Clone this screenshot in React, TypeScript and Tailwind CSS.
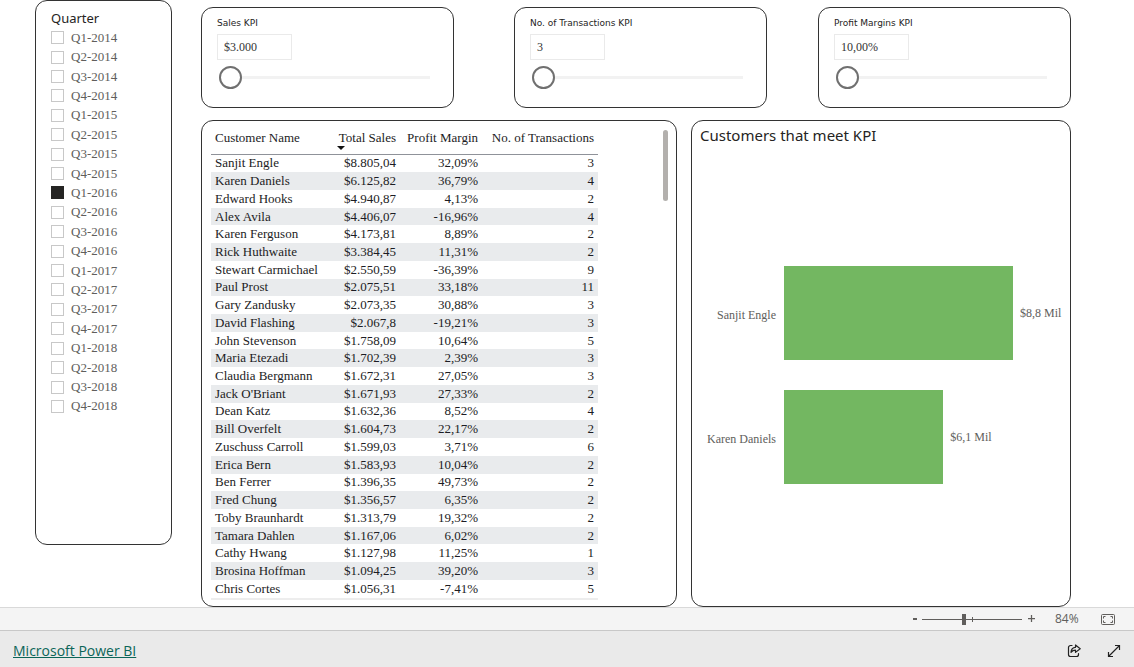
import { useState } from "react";

const serif = "font-['Liberation_Serif',serif]";
const sans = "font-['Noto_Sans',sans-serif]";
const panel = "rounded-xl border border-[#333] bg-white";

const years = [2014, 2015, 2016, 2017, 2018];
const quarters = years.flatMap((y) => [1, 2, 3, 4].map((q) => `Q${q}-${y}`));

const customers: [string, string, string, number][] = [
  ["Sanjit Engle", "$8.805,04", "32,09%", 3],
  ["Karen Daniels", "$6.125,82", "36,79%", 4],
  ["Edward Hooks", "$4.940,87", "4,13%", 2],
  ["Alex Avila", "$4.406,07", "-16,96%", 4],
  ["Karen Ferguson", "$4.173,81", "8,89%", 2],
  ["Rick Huthwaite", "$3.384,45", "11,31%", 2],
  ["Stewart Carmichael", "$2.550,59", "-36,39%", 9],
  ["Paul Prost", "$2.075,51", "33,18%", 11],
  ["Gary Zandusky", "$2.073,35", "30,88%", 3],
  ["David Flashing", "$2.067,8", "-19,21%", 3],
  ["John Stevenson", "$1.758,09", "10,64%", 5],
  ["Maria Etezadi", "$1.702,39", "2,39%", 3],
  ["Claudia Bergmann", "$1.672,31", "27,05%", 3],
  ["Jack O'Briant", "$1.671,93", "27,33%", 2],
  ["Dean Katz", "$1.632,36", "8,52%", 4],
  ["Bill Overfelt", "$1.604,73", "22,17%", 2],
  ["Zuschuss Carroll", "$1.599,03", "3,71%", 6],
  ["Erica Bern", "$1.583,93", "10,04%", 2],
  ["Ben Ferrer", "$1.396,35", "49,73%", 2],
  ["Fred Chung", "$1.356,57", "6,35%", 2],
  ["Toby Braunhardt", "$1.313,79", "19,32%", 2],
  ["Tamara Dahlen", "$1.167,06", "6,02%", 2],
  ["Cathy Hwang", "$1.127,98", "11,25%", 1],
  ["Brosina Hoffman", "$1.094,25", "39,20%", 3],
  ["Chris Cortes", "$1.056,31", "-7,41%", 5],
];

const bars = [
  { name: "Sanjit Engle", sales: 8805.04, label: "$8,8 Mil" },
  { name: "Karen Daniels", sales: 6125.82, label: "$6,1 Mil" },
];
const maxSales = Math.max(...bars.map((b) => b.sales));

function Slicer() {
  const [selected, setSelected] = useState("Q1-2016");
  return (
    <fieldset className={`${panel} mb-[62px] w-[137px] shrink-0 px-[15px] pt-[7px]`}>
      <legend className={`${sans} float-left text-[13px] leading-5 text-[#252423]`}>Quarter</legend>
      <ul className="clear-both flex h-[388px] flex-col">
        {quarters.map((q) => (
          <li key={q} className="flex flex-1 items-center">
            <label className={`${serif} flex items-center gap-[7px] text-[13px] leading-4 text-[#605e5c]`}>
              <input
                type="checkbox"
                checked={selected === q}
                onChange={() => setSelected(q)}
                className="size-[13px] appearance-none border border-[#c8c8c8] bg-white checked:border-[#252423] checked:bg-[#252423]"
              />
              {q}
            </label>
          </li>
        ))}
      </ul>
    </fieldset>
  );
}

function KpiCard({ id, title, value, className = "" }: { id: string; title: string; value: string; className?: string }) {
  const [text, setText] = useState(value);
  return (
    <section className={`${panel} h-[101px] min-w-0 flex-1 px-[15px] pt-[7px] ${className}`}>
      <label htmlFor={id} className="block font-['DejaVu_Sans',sans-serif] text-[9px] leading-4 text-[#252423]">
        {title}
      </label>
      <input
        id={id}
        value={text}
        onChange={(e) => setText(e.target.value)}
        className={`${serif} mt-[3px] block h-[26px] w-[75px] border border-[#eaeaea] px-1.5 text-[12px] leading-4 text-[#333]`}
      />
      <div className="mt-1.5 pr-2 pl-0.5">
        <input
          type="range"
          aria-label={title}
          defaultValue={0}
          className="block h-[23px] w-full appearance-none bg-transparent [&::-webkit-slider-runnable-track]:h-[3px] [&::-webkit-slider-runnable-track]:bg-[#f2f2f2] [&::-webkit-slider-thumb]:-mt-[10px] [&::-webkit-slider-thumb]:size-[23px] [&::-webkit-slider-thumb]:appearance-none [&::-webkit-slider-thumb]:rounded-full [&::-webkit-slider-thumb]:border-2 [&::-webkit-slider-thumb]:border-[#707070] [&::-webkit-slider-thumb]:bg-white"
        />
      </div>
    </section>
  );
}

function CustomerTable() {
  return (
    <section className={`${panel} flex items-start justify-between pt-[9px] pr-2 pl-[9px]`}>
      <table className={`${serif} h-[470px] w-[387px] table-fixed border-collapse border-b-2 border-[#ededed] text-[13px] leading-4 text-[#1c1c24]`}>
        <colgroup>
          <col className="w-[120px]" />
          <col className="w-[69px]" />
          <col className="w-[82px]" />
          <col />
        </colgroup>
        <thead>
          <tr className="h-6 border-b border-[#8f9299] align-top whitespace-nowrap">
            <th className="px-1 text-left font-normal">Customer Name</th>
            <th className="px-1 text-right font-normal" aria-sort="descending">
              Total Sales
              <svg viewBox="0 0 8 4" className="ml-0.5 block h-1 w-2" fill="#111">
                <path d="M0 0h8L4 4z" />
              </svg>
            </th>
            <th className="px-1 text-right font-normal">Profit Margin</th>
            <th className="px-1 text-right font-normal">No. of Transactions</th>
          </tr>
        </thead>
        <tbody>
          {customers.map(([name, sales, margin, count]) => (
            <tr key={name} className="even:bg-[#e9ebed]">
              <td className="px-1">{name}</td>
              <td className="px-1 text-right">{sales}</td>
              <td className="px-1 text-right">{margin}</td>
              <td className="px-1 text-right">{count}</td>
            </tr>
          ))}
        </tbody>
      </table>
      <div className="h-[71px] w-[5px] rounded-full bg-[#b3b0ad]" />
    </section>
  );
}

function BarChart() {
  return (
    <section className={`${panel} pr-[57px] pl-2`}>
      <h2 className={`${sans} pt-1 text-[15px] leading-5 whitespace-nowrap text-[#252423]`}>Customers that meet KPI</h2>
      <ul className={`${serif} mt-[121px] flex flex-col gap-[30px] text-[12px] leading-4 text-[#605e5c]`}>
        {bars.map((b) => (
          <li key={b.name} className="flex h-[94px] items-center">
            <span className="mt-1 w-[76px] shrink-0 text-right whitespace-nowrap">{b.name}</span>
            <div className="ml-2 flex h-full min-w-0 flex-1 items-center">
              <div className="h-full shrink-0 bg-[#73b761]" style={{ width: `${(b.sales / maxSales) * 100}%` }} />
              <span className="ml-[7px] whitespace-nowrap">{b.label}</span>
            </div>
          </li>
        ))}
      </ul>
    </section>
  );
}

function StatusBar() {
  const btn = "flex items-center justify-center";
  return (
    <div className="flex h-6 shrink-0 items-center justify-end border-y border-t-[#d9d9d9] border-b-[#c8c8c8] bg-[#f4f4f4] pr-[19px] text-[#605e5c]">
      <button aria-label="Zoom out" className={`${btn} h-4 w-3`}>
        <svg viewBox="0 0 12 16" className="h-4 w-3" stroke="currentColor" strokeWidth="2">
          <path d="M4 8h4" />
        </svg>
      </button>
      <div className="relative ml-px flex w-[100px] items-center">
        <input
          type="range"
          aria-label="Zoom level"
          defaultValue={42}
          className="block h-3 w-full appearance-none bg-transparent [&::-webkit-slider-runnable-track]:h-px [&::-webkit-slider-runnable-track]:bg-[#605e5c] [&::-webkit-slider-thumb]:-mt-[5px] [&::-webkit-slider-thumb]:h-[11px] [&::-webkit-slider-thumb]:w-1 [&::-webkit-slider-thumb]:appearance-none [&::-webkit-slider-thumb]:bg-[#605e5c]"
        />
        <span className="pointer-events-none absolute left-1/2 h-[5px] w-px bg-[#605e5c]" />
      </div>
      <button aria-label="Zoom in" className={`${btn} ml-1 h-4 w-3`}>
        <svg viewBox="0 0 12 16" className="h-4 w-3" stroke="currentColor" strokeWidth="1.25">
          <path d="M2 7.500h7M5.500 4v7" />
        </svg>
      </button>
      <span className="ml-[17px] w-7 font-['Open_Sans',sans-serif] text-[12px] leading-4">84%</span>
      <button aria-label="Fit to page" className={`${btn} ml-[18px]`}>
        <svg viewBox="0 0 14 11" className="h-[11px] w-3.5" fill="none" stroke="currentColor">
          <rect x=".5" y=".5" width="13" height="10" rx="1" />
          <path d="M2.500 4.500v-2h2M9.500 2.500h2v2M11.500 6.500v2h-2M4.500 8.500h-2v-2" />
        </svg>
      </button>
    </div>
  );
}

export default function App() {
  return (
    <div className="flex min-h-screen flex-col bg-white">
      <main className="flex flex-1 gap-[29px] pr-[63px] pl-[35px]">
        <Slicer />
        <div className="flex min-w-0 flex-1 flex-col gap-3 pt-[7px]">
          <div className="flex">
            <KpiCard id="sales" title="Sales KPI" value="$3.000" />
            <KpiCard id="transactions" title="No. of Transactions KPI" value="3" className="ml-[60px]" />
            <KpiCard id="margins" title="Profit Margins KPI" value="10,00%" className="ml-[51px]" />
          </div>
          <div className="grid flex-1 grid-cols-[476fr_380fr] gap-3.5">
            <CustomerTable />
            <BarChart />
          </div>
        </div>
      </main>
      <StatusBar />
      <footer className="flex h-9 shrink-0 items-center justify-between bg-[#eaeaea] pt-1 pr-[13px] pl-[13px]">
        <a href="#" className="font-['Open_Sans',sans-serif] text-[14px] leading-5 text-[#0b6558] underline">
          Microsoft Power BI
        </a>
        <div className="flex items-center gap-[26px] text-[#222]">
          <button aria-label="Share">
            <svg viewBox="0 0 14 14" className="size-3.5" fill="none" stroke="currentColor" strokeWidth="1.2" strokeLinejoin="round" strokeLinecap="round">
              <path d="M5 1.500H3.500a2 2 0 0 0-2 2v7a2 2 0 0 0 2 2h6a2 2 0 0 0 2-2V9.500" />
              <path d="M8.500 1v2.300C5.600 3.500 4.200 5.300 4 8.300c1.200-1.600 2.600-2.200 4.500-2.200v2.300L13.200 4.700z" />
            </svg>
          </button>
          <button aria-label="Full screen">
            <svg viewBox="0 0 14 14" className="size-3.5" fill="none" stroke="currentColor" strokeWidth="1.2">
              <path d="M1.500 12.500l11-11M8 1.500h4.500V6M1.500 8v4.500H6" />
            </svg>
          </button>
        </div>
      </footer>
    </div>
  );
}
